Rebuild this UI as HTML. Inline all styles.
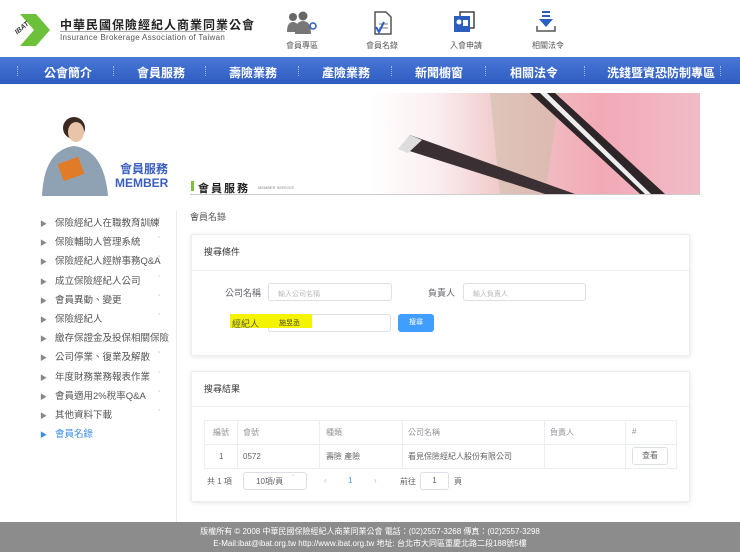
<!DOCTYPE html>
<html><head><meta charset="utf-8"><style>
*{margin:0;padding:0;box-sizing:border-box}
body{width:740px;height:552px;overflow:hidden;background:#fff;font-family:"Liberation Sans","Noto Sans CJK TC",sans-serif;position:relative;color:#606266}
.a{position:absolute}
.nav{top:57px;left:0;width:740px;height:27px;background:linear-gradient(#4a78d8,#2f5cc0);color:#fff;font-size:12px;font-weight:bold}
.nav span{position:absolute;top:7px}
.sep{position:absolute;top:9px;width:1px;height:10px;border-left:1px dotted #9fb8ee}
.ic{font-size:8px;color:#555;top:40px}
.side{left:40px;font-size:9.5px;color:#555}
.side i{font-style:normal;font-size:7px;color:#888;margin-right:8px}
.card{background:#fff;border:1px solid #eee;box-shadow:0 1px 5px rgba(0,0,0,.1)}
.inp{border:1px solid #dcdfe6;border-radius:3px;background:#fff;font-size:7px;color:#bbb;padding:5px 9px}
.td{position:absolute;font-size:8px;color:#606266}
</style></head><body>
<svg class="a" style="left:12px;top:10px" width="40" height="40"><polygon points="8,4 24,4 38,20 24,36 8,36 22,20" fill="#6cc03a"/><text x="2" y="20" font-size="7" font-style="italic" font-weight="bold" fill="#333" transform="rotate(-40 10 18)">IBAT</text></svg>
<div class="a" style="left:60px;top:16px;font-size:12px;font-weight:bold;color:#222;letter-spacing:1px">中華民國保險經紀人商業同業公會</div>
<div class="a" style="left:60px;top:31px;font-size:8px;color:#555;border-top:1px solid #aaa;padding-top:1px;letter-spacing:.3px">Insurance Brokerage Association of Taiwan</div>
<svg class="a" style="left:286px;top:10px" width="34" height="26"><circle cx="7" cy="7" r="4" fill="#666"/><circle cx="17" cy="6" r="4.5" fill="#666"/><path d="M1,22 Q1,12 7,12 Q13,12 13,22Z M9,24 Q9,11 17,11 Q25,11 25,24Z" fill="#777"/><circle cx="27" cy="16" r="3" fill="none" stroke="#2a5fc0" stroke-width="1.5"/></svg>
<div class="a ic" style="left:286px">會員專區</div>
<svg class="a" style="left:372px;top:10px" width="22" height="26"><path d="M3,2 H14 L19,7 V24 H3Z" fill="#fff" stroke="#555" stroke-width="1.5"/><path d="M7,14 H16 M7,18 H16" stroke="#777"/><path d="M4,17 L7,22 L12,12" stroke="#2a5fc0" stroke-width="2" fill="none"/></svg>
<div class="a ic" style="left:366px">會員名錄</div>
<svg class="a" style="left:452px;top:10px" width="24" height="24"><rect x="8" y="2" width="14" height="16" fill="#fff" stroke="#444" stroke-width="1.5"/><rect x="2" y="6" width="16" height="16" fill="#2a5fc0"/><circle cx="7" cy="12" r="2.5" fill="#fff"/><rect x="11" y="10" width="5" height="6" fill="#fff"/></svg>
<div class="a ic" style="left:450px">入會申請</div>
<svg class="a" style="left:534px;top:10px" width="24" height="24"><rect x="8" y="1" width="8" height="2" fill="#2a5fc0"/><rect x="8" y="5" width="8" height="2" fill="#2a5fc0"/><path d="M5,9 H19 L12,17Z" fill="#2a5fc0"/><path d="M3,16 V21 H21 V16" stroke="#555" stroke-width="1.5" fill="none"/></svg>
<div class="a ic" style="left:532px">相關法令</div>
<div class="a nav">
<div class="sep" style="left:17px"></div><span style="left:44px">公會簡介</span>
<div class="sep" style="left:113px"></div><span style="left:137px">會員服務</span>
<div class="sep" style="left:205px"></div><span style="left:229px">壽險業務</span>
<div class="sep" style="left:298px"></div><span style="left:322px">產險業務</span>
<div class="sep" style="left:391px"></div><span style="left:415px">新聞櫥窗</span>
<div class="sep" style="left:485px"></div><span style="left:510px">相關法令</span>
<div class="sep" style="left:584px"></div><span style="left:607px">洗錢暨資恐防制專區</span>
<div class="sep" style="left:720px"></div>
</div>
<svg class="a" style="left:38px;top:110px" width="75" height="86"><circle cx="36" cy="18" r="11" fill="#3a2a22"/><ellipse cx="38" cy="22" rx="8" ry="10" fill="#e8c4a8"/><path d="M4,86 Q6,40 36,36 Q66,40 70,86Z" fill="#8fa2b4"/><rect x="22" y="50" width="22" height="18" fill="#e07b28" transform="rotate(-20 33 59)"/></svg>
<div class="a" style="left:120px;top:160px;font-size:12px;font-weight:bold;color:#3a5fc0">會員服務</div>
<div class="a" style="left:115px;top:176px;font-size:12px;font-weight:bold;color:#3a5fc0">MEMBER</div>
<div class="a" style="left:370px;top:93px;width:330px;height:101px;background:linear-gradient(90deg,#fff 0%,#fbeef0 20%,#f0c9c9 40%,#f2a9b6 70%,#f0bcc6 100%)"></div>
<svg class="a" style="left:370px;top:93px" width="330" height="101"><path d="M120,0 L190,0 L175,101 L130,101Z" fill="#c9bca6" opacity=".5"/><path d="M30,55 L175,101 L205,101 L40,42Z" fill="#3a3034"/><path d="M28,56 L40,42 L52,47 L38,60Z" fill="#ddd"/><path d="M160,0 L270,101 L295,101 L185,0Z" fill="#2d2528"/><path d="M170,0 L275,101 L281,101 L177,0Z" fill="#eee"/></svg>
<div class="a" style="left:191px;top:181px;width:3px;height:10px;background:#7cc23c"></div>
<div class="a" style="left:198px;top:180px;font-size:11px;font-weight:bold;color:#222;letter-spacing:2px">會員服務</div>
<div class="a" style="left:258px;top:185px;font-size:4px;color:#888">MEMBER SERVICE</div>
<div class="a" style="left:190px;top:194px;width:510px;height:1px;background:#ccc"></div>
<div class="a" style="left:176px;top:210px;width:1px;height:312px;background:#eee"></div>
<div class="a side" style="top:215px"><i>▶</i>保險經紀人在職教育訓練</div>
<div class="a side" style="top:234px"><i>▶</i>保險輔助人管理系統</div>
<div class="a side" style="top:253px"><i>▶</i>保險經紀人經辦事務Q&amp;A</div>
<div class="a side" style="top:273px"><i>▶</i>成立保險經紀人公司</div>
<div class="a side" style="top:292px"><i>▶</i>會員異動、變更</div>
<div class="a side" style="top:311px"><i>▶</i>保險經紀人</div>
<div class="a side" style="top:330px"><i>▶</i>繳存保證金及投保相關保險</div>
<div class="a side" style="top:349px"><i>▶</i>公司停業、復業及解散</div>
<div class="a side" style="top:369px"><i>▶</i>年度財務業務報表作業</div>
<div class="a side" style="top:388px"><i>▶</i>會員適用2%稅率Q&amp;A</div>
<div class="a side" style="top:407px"><i>▶</i>其他資料下載</div>
<div class="a side" style="top:426px;color:#3a8ee6"><i style="color:#3a8ee6">▶</i>會員名錄</div>
<div class="a" style="left:158px;top:212px;font-size:7px;color:#aaa;line-height:19.2px">ˇ<br>ˇ<br>ˇ<br>ˇ<br>ˇ<br>ˇ<br><br>ˇ<br>ˇ<br>ˇ<br>ˇ</div>
<div class="a" style="left:190px;top:210px;font-size:9px;color:#555">會員名錄</div>
<div class="a card" style="left:191px;top:234px;width:499px;height:122px"></div>
<div class="a" style="left:204px;top:245px;font-size:9px;color:#333">搜尋條件</div>
<div class="a" style="left:192px;top:270px;width:497px;height:1px;background:#ebeef5"></div>
<div class="a" style="left:225px;top:286px;font-size:9px">公司名稱</div>
<div class="a inp" style="left:268px;top:283px;width:124px;height:18px">輸入公司名稱</div>
<div class="a" style="left:428px;top:286px;font-size:9px">負責人</div>
<div class="a inp" style="left:463px;top:283px;width:123px;height:18px">輸入負責人</div>
<div class="a" style="left:230px;top:314px;width:82px;height:14px;background:#f4f400"></div>
<div class="a inp" style="left:268px;top:314px;width:123px;height:18px;background:transparent;color:#555"></div>
<div class="a" style="left:268px;top:314px;width:44px;height:14px;background:#f4f400"></div>
<div class="a" style="left:232px;top:317px;font-size:9px;color:#555">經紀人</div>
<div class="a" style="left:279px;top:318px;font-size:7px;color:#444">施昱丞</div>
<div class="a" style="left:398px;top:314px;width:36px;height:18px;background:#409eff;border-radius:3px;color:#fff;font-size:7px;text-align:center;line-height:18px">搜尋</div>
<div class="a card" style="left:191px;top:371px;width:499px;height:131px"></div>
<div class="a" style="left:204px;top:382px;font-size:9px;color:#333">搜尋結果</div>
<div class="a" style="left:192px;top:406px;width:497px;height:1px;background:#ebeef5"></div>
<div class="a" style="left:204px;top:420px;width:473px;height:49px;border:1px solid #ebeef5"></div>
<div class="a" style="left:204px;top:444px;width:473px;height:1px;background:#ebeef5"></div>
<div class="a" style="left:237px;top:420px;width:1px;height:49px;background:#ebeef5"></div>
<div class="a" style="left:319px;top:420px;width:1px;height:49px;background:#ebeef5"></div>
<div class="a" style="left:402px;top:420px;width:1px;height:49px;background:#ebeef5"></div>
<div class="a" style="left:544px;top:420px;width:1px;height:49px;background:#ebeef5"></div>
<div class="a" style="left:625px;top:420px;width:1px;height:49px;background:#ebeef5"></div>
<div class="td" style="left:213px;top:427px;color:#909399">編號</div>
<div class="td" style="left:243px;top:427px;color:#909399">會號</div>
<div class="td" style="left:326px;top:427px;color:#909399">種類</div>
<div class="td" style="left:408px;top:427px;color:#909399">公司名稱</div>
<div class="td" style="left:550px;top:427px;color:#909399">負責人</div>
<div class="td" style="left:632px;top:427px;color:#909399">#</div>
<div class="td" style="left:219px;top:452px">1</div>
<div class="td" style="left:243px;top:452px">0572</div>
<div class="td" style="left:326px;top:451px">壽險 產險</div>
<div class="td" style="left:408px;top:451px">看見保險經紀人股份有限公司</div>
<div class="a" style="left:632px;top:447px;width:36px;height:18px;border:1px solid #dcdfe6;border-radius:3px;font-size:8px;text-align:center;line-height:16px">查看</div>
<div class="td" style="left:207px;top:476px">共 1 項</div>
<div class="a inp" style="left:243px;top:472px;width:64px;height:18px;color:#606266;font-size:8px;padding:3px 12px">10項/頁 <span style="float:right;font-size:6px;color:#bbb">ˇ</span></div>
<div class="td" style="left:324px;top:476px;color:#bbb">‹</div>
<div class="td" style="left:348px;top:476px;color:#409eff">1</div>
<div class="td" style="left:374px;top:476px;color:#bbb">›</div>
<div class="td" style="left:400px;top:476px">前往</div>
<div class="a inp" style="left:420px;top:472px;width:29px;height:18px;color:#606266;font-size:8px;text-align:center;padding:3px 0">1</div>
<div class="td" style="left:454px;top:476px">頁</div>
<div class="a" style="left:0;top:522px;width:740px;height:30px;background:#8c8c8c;color:#fff;font-size:8px;text-align:center;line-height:12px;padding-top:4px">版權所有 © 2008 中華民國保險經紀人商業同業公會 電話：(02)2557-3268 傳真：(02)2557-3298<br>E-Mail:ibat@ibat.org.tw http://www.ibat.org.tw 地址: 台北市大同區重慶北路二段188號5樓</div>
</body></html>
